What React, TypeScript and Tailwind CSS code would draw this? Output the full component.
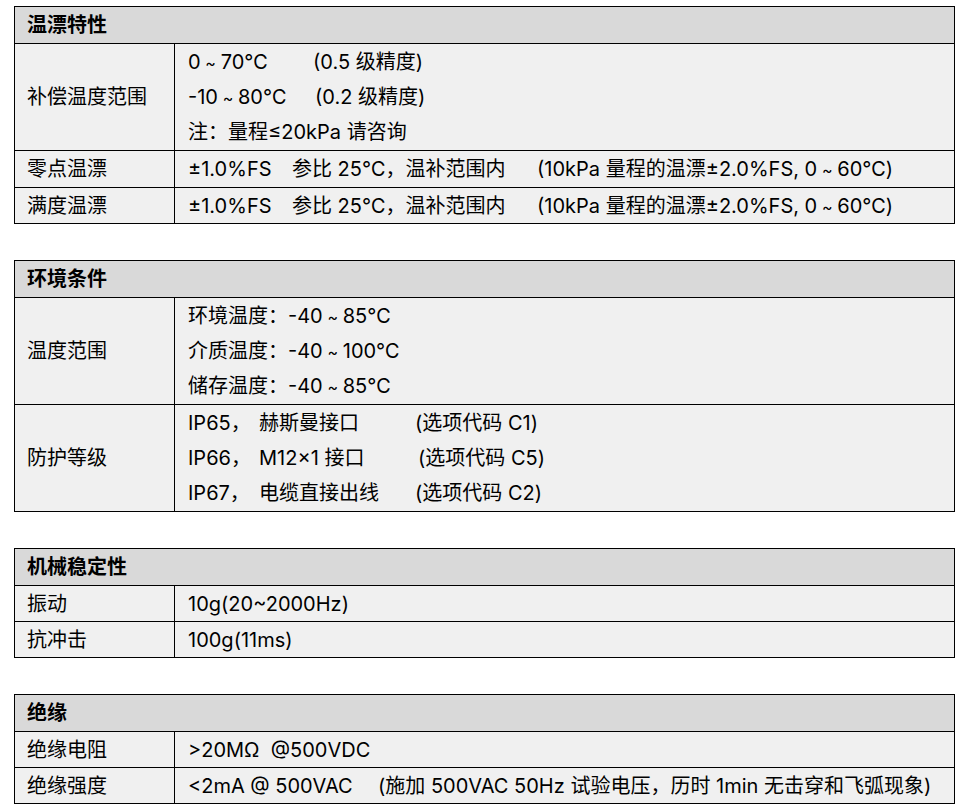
type Seg = { t: string; w?: number };
type Row = { label: string; lines: Seg[][]; h: number };
type Spec = { title: string; rows: Row[] };

const spans: Record<number, string> = {
  125: "w-[125px]",
  127: "w-[127px]",
  104: "w-[104px]",
  245: "w-[245px]",
  71: "w-[71px]",
  156: "w-[156px]",
  159: "w-[159px]",
  190: "w-[190px]",
};

const specs: Spec[] = [
  {
    title: "温漂特性",
    rows: [
      {
        label: "补偿温度范围",
        h: 106,
        lines: [
          [{ t: "0～70℃", w: 125 }, { t: "(0.5 级精度)" }],
          [{ t: "-10～80℃", w: 127 }, { t: "(0.2 级精度)" }],
          [{ t: "注：量程≤20kPa 请咨询" }],
        ],
      },
      {
        label: "零点温漂",
        h: 36,
        lines: [[{ t: "±1.0%FS", w: 104 }, { t: "参比 25℃，温补范围内", w: 245 }, { t: "(10kPa 量程的温漂±2.0%FS, 0～60℃)" }]],
      },
      {
        label: "满度温漂",
        h: 35,
        lines: [[{ t: "±1.0%FS", w: 104 }, { t: "参比 25℃，温补范围内", w: 245 }, { t: "(10kPa 量程的温漂±2.0%FS, 0～60℃)" }]],
      },
    ],
  },
  {
    title: "环境条件",
    rows: [
      {
        label: "温度范围",
        h: 106,
        lines: [[{ t: "环境温度：-40～85℃" }], [{ t: "介质温度：-40～100℃" }], [{ t: "储存温度：-40～85℃" }]],
      },
      {
        label: "防护等级",
        h: 106,
        lines: [
          [{ t: "IP65，", w: 71 }, { t: "赫斯曼接口", w: 156 }, { t: "(选项代码 C1)" }],
          [{ t: "IP66，", w: 71 }, { t: "M12×1 接口", w: 159 }, { t: "(选项代码 C5)" }],
          [{ t: "IP67，", w: 71 }, { t: "电缆直接出线", w: 156 }, { t: "(选项代码 C2)" }],
        ],
      },
    ],
  },
  {
    title: "机械稳定性",
    rows: [
      { label: "振动", h: 35, lines: [[{ t: "10g(20~2000Hz)" }]] },
      { label: "抗冲击", h: 35, lines: [[{ t: "100g(11ms)" }]] },
    ],
  },
  {
    title: "绝缘",
    rows: [
      { label: "绝缘电阻", h: 35, lines: [[{ t: ">20MΩ  @500VDC" }]] },
      {
        label: "绝缘强度",
        h: 35,
        lines: [[{ t: "<2mA @ 500VAC", w: 190 }, { t: "(施加 500VAC 50Hz 试验电压，历时 1min 无击穿和飞弧现象)" }]],
      },
    ],
  },
];

const rowH: Record<number, string> = {
  35: "h-[35px]",
  36: "h-[36px]",
  106: "h-[106px]",
};

// the range tilde is drawn small and centred, as in the source sheet
function Text({ t }: { t: string }) {
  const parts = t.split("～");
  return (
    <>
      {parts.map((p, i) => (
        <span key={i}>
          {i > 0 && <span className="inline-block w-[20px] text-center text-[16px]">~</span>}
          {p}
        </span>
      ))}
    </>
  );
}

function SpecTable({ spec, first }: { spec: Spec; first: boolean }) {
  return (
    <div className={`w-[941px] border border-black ${first ? "" : "mt-9"}`}>
      <div className="h-[37px] border-b border-black bg-[#d9d9d9] pl-3 flex items-center font-bold">
        {spec.title}
      </div>
      {spec.rows.map((r, i) => (
        <div
          key={r.label}
          className={`grid grid-cols-[160px_1fr] bg-[#f0f0f0] ${
            i < spec.rows.length - 1 ? "border-b border-black" : ""
          }`}
        >
          <div className={`${rowH[r.h]} border-r border-black pl-3 flex items-center`}>{r.label}</div>
          <div className={`${rowH[r.h]} pl-[13px] flex flex-col justify-center`}>
            {r.lines.map((line, j) => (
              <div key={j} className="h-[35px] flex items-center whitespace-pre">
                {line.map((s, k) => (
                  <span key={k} className={s.w ? `inline-block shrink-0 ${spans[s.w]}` : ""}>
                    <Text t={s.t} />
                  </span>
                ))}
              </div>
            ))}
          </div>
        </div>
      ))}
    </div>
  );
}

export default function App() {
  return (
    <div className="min-h-[811px] bg-white pt-[6px] pl-[14px] text-black text-[20px] font-['Inter','Noto_Sans_CJK_SC',sans-serif]">
      {specs.map((s, i) => (
        <SpecTable key={s.title} spec={s} first={i === 0} />
      ))}
    </div>
  );
}
